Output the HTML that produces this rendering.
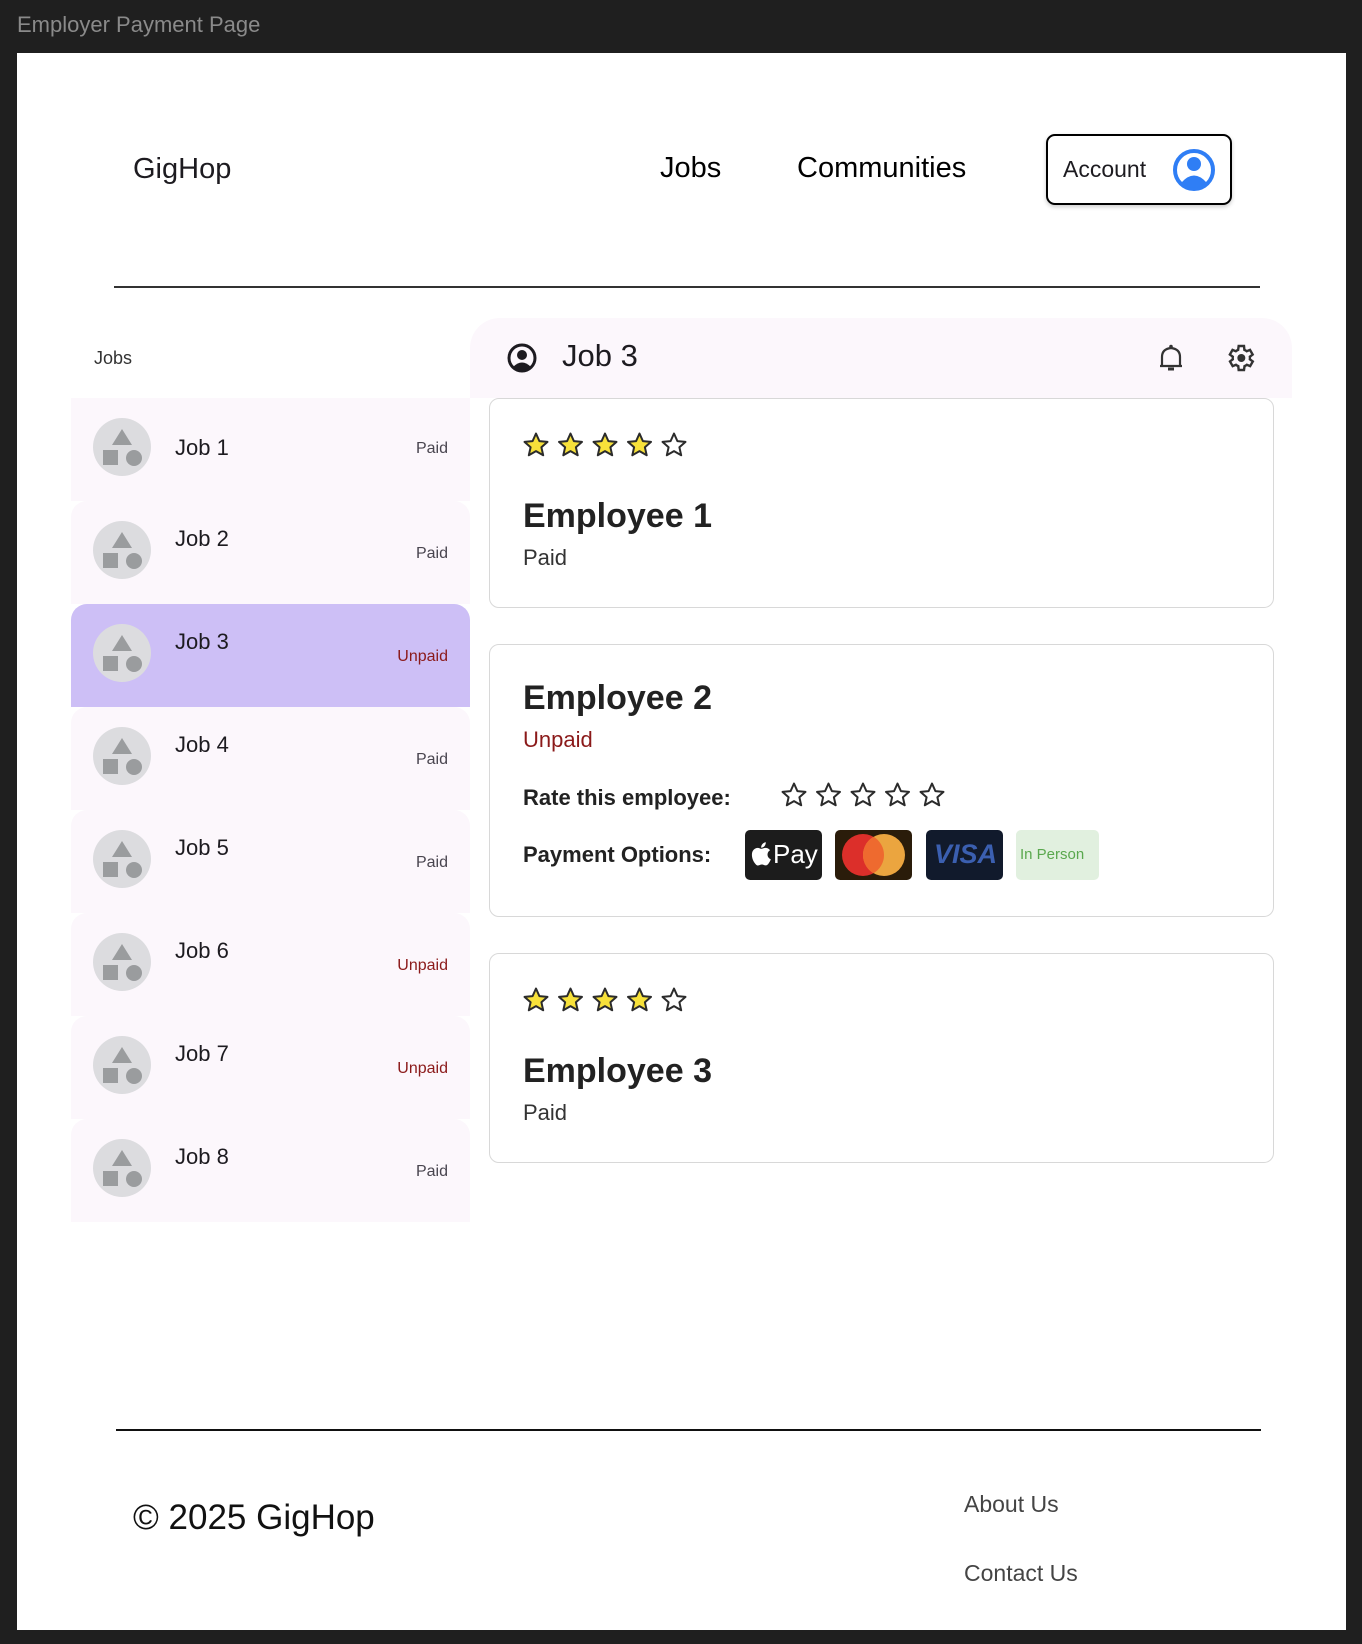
<!DOCTYPE html>
<html><head><meta charset="utf-8"><style>
*{box-sizing:border-box;margin:0;padding:0}
body{width:1362px;height:1644px;background:#1f1f1f;font-family:"Liberation Sans",sans-serif;position:relative;overflow:hidden;color:#1d1b20}
.abs{position:absolute}
.title{left:17px;top:12px;color:#8a8a8a;font-size:22px}
.panel{left:17px;top:53px;width:1329px;height:1577px;background:#fff}
.nav{font-size:29px;color:#000}
.acct{left:1046px;top:134px;width:186px;height:71px;border:2px solid #000;border-radius:9px;box-shadow:0 2px 4px rgba(0,0,0,.2)}
.line{height:2px;background:#333}
.item{left:71px;width:399px;height:103px;background:#fcf7fc;border-radius:16px 16px 0 0}
.item.sel{background:#cdbff6}
.av{position:absolute;left:22px;top:20px;width:58px;height:58px}
.jt{position:absolute;left:104px;font-size:22px;color:#1d1b20}
.st{position:absolute;right:22px;font-size:16px;color:#49454f}
.st.u{color:#8b1a1a}
.card{left:489px;width:785px;border:1.5px solid #d8d8d8;border-radius:10px;background:#fff}
.emp{font-size:34px;font-weight:bold;color:#222;position:absolute;left:33px}
.sub{font-size:22px;color:#333;position:absolute;left:33px}
.lbl{font-size:22px;font-weight:bold;color:#222;position:absolute;left:33px}
.stars{position:absolute;left:33px;display:flex;gap:7px}
.pay{position:absolute;top:185px;width:77px;height:50px;border-radius:5px;overflow:hidden}
</style></head><body>
<svg width="0" height="0" style="position:absolute"><defs>
<g id="avt"><circle cx="29" cy="29" r="29" fill="#dcdcdf"/><path d="M29 11L39 27H19Z" fill="#9a9c9e"/><rect x="10" y="32" width="15" height="15" fill="#9a9c9e"/><circle cx="41" cy="40" r="8" fill="#9a9c9e"/></g>
<path id="s" d="M13 1.5l3.4 7.6 8.1.8-6.1 5.4 1.8 8-7.2-4.2-7.2 4.2 1.8-8L1.5 9.9l8.1-.8z" stroke="#2b2b2b" stroke-width="2" stroke-linejoin="round"/>
</defs></svg>
<div class="abs title">Employer Payment Page</div>
<div class="abs panel"></div>
<div class="abs" style="left:133px;top:153px;font-size:29px">GigHop</div>
<div class="abs nav" style="left:660px;top:152px">Jobs</div>
<div class="abs nav" style="left:797px;top:152px">Communities</div>
<div class="abs acct"><span class="abs" style="left:15px;top:20px;font-size:23px">Account</span>
<svg class="abs" style="left:124px;top:12px" width="44" height="44" viewBox="0 0 44 44"><circle cx="22" cy="22" r="19" fill="none" stroke="#2f7ef5" stroke-width="4"/><circle cx="22" cy="16" r="7" fill="#2f7ef5"/><path d="M9 35 Q22 20 35 35 Q22 44 9 35Z" fill="#2f7ef5"/></svg></div>
<div class="abs line" style="left:114px;top:286px;width:1146px"></div>

<div class="abs" style="left:94px;top:348px;font-size:18px;color:#333">Jobs</div>
<div class="abs" style="left:470px;top:318px;width:822px;height:80px;background:#fcf7fc;border-radius:30px 30px 0 0"></div>
<svg class="abs" style="left:506px;top:342px" width="32" height="32" viewBox="0 0 32 32"><circle cx="16" cy="16" r="13" fill="none" stroke="#1d1b20" stroke-width="3"/><circle cx="16" cy="13" r="5" fill="#1d1b20"/><path d="M7 25 Q16 16 25 25 Q16 31 7 25Z" fill="#1d1b20"/></svg>
<div class="abs" style="left:562px;top:338px;font-size:31px">Job 3</div>
<svg class="abs" style="left:1158px;top:343px" width="26" height="30" viewBox="0 0 26 30"><path d="M4 23V14Q4 6 13 5Q22 6 22 14V23ZM2 23H24" fill="none" stroke="#333" stroke-width="2.2"/><circle cx="13" cy="3.5" r="1.8" fill="#333"/><path d="M10 26H16" stroke="#333" stroke-width="3"/></svg>
<svg class="abs" style="left:1224px;top:342px" width="32" height="32" viewBox="0 0 24 24"><path d="M19.4 13a7.5 7.5 0 0 0 0-2l2.1-1.6-2-3.5-2.5 1a7 7 0 0 0-1.7-1L15 3h-4l-.4 2.9a7 7 0 0 0-1.7 1l-2.5-1-2 3.5L6.6 11a7.5 7.5 0 0 0 0 2l-2.1 1.6 2 3.5 2.5-1a7 7 0 0 0 1.7 1L11 21h4l.4-2.9a7 7 0 0 0 1.7-1l2.5 1 2-3.5z" fill="none" stroke="#333" stroke-width="1.8"/><circle cx="13" cy="12" r="3" fill="#333"/></svg>

<div class="abs item" style="top:398px;border-radius:0"><svg class="av" viewBox="0 0 58 58"><use href="#avt"/></svg><span class="jt" style="top:37px">Job 1</span><span class="st" style="top:42px">Paid</span></div>
<div class="abs item" style="top:501px"><svg class="av" viewBox="0 0 58 58"><use href="#avt"/></svg><span class="jt" style="top:25px">Job 2</span><span class="st" style="top:44px">Paid</span></div>
<div class="abs item sel" style="top:604px"><svg class="av" viewBox="0 0 58 58"><use href="#avt"/></svg><span class="jt" style="top:25px">Job 3</span><span class="st u" style="top:44px">Unpaid</span></div>
<div class="abs item" style="top:707px"><svg class="av" viewBox="0 0 58 58"><use href="#avt"/></svg><span class="jt" style="top:25px">Job 4</span><span class="st" style="top:44px">Paid</span></div>
<div class="abs item" style="top:810px"><svg class="av" viewBox="0 0 58 58"><use href="#avt"/></svg><span class="jt" style="top:25px">Job 5</span><span class="st" style="top:44px">Paid</span></div>
<div class="abs item" style="top:913px"><svg class="av" viewBox="0 0 58 58"><use href="#avt"/></svg><span class="jt" style="top:25px">Job 6</span><span class="st u" style="top:44px">Unpaid</span></div>
<div class="abs item" style="top:1016px"><svg class="av" viewBox="0 0 58 58"><use href="#avt"/></svg><span class="jt" style="top:25px">Job 7</span><span class="st u" style="top:44px">Unpaid</span></div>
<div class="abs item" style="top:1119px"><svg class="av" viewBox="0 0 58 58"><use href="#avt"/></svg><span class="jt" style="top:25px">Job 8</span><span class="st" style="top:44px">Paid</span></div>

<div class="abs card" style="top:398px;height:210px">
<div class="stars" style="top:33px"><svg width="250" height="30" viewBox="0 0 250 30"><use href="#s" fill="#f7e13a"/><use href="#s" x="34.5" fill="#f7e13a"/><use href="#s" x="69" fill="#f7e13a"/><use href="#s" x="103.5" fill="#f7e13a"/><use href="#s" x="138" fill="none"/></svg></div>
<div class="emp" style="top:98px">Employee 1</div>
<div class="sub" style="top:146px">Paid</div>
</div>
<div class="abs card" style="top:644px;height:273px">
<div class="emp" style="top:34px">Employee 2</div>
<div class="sub" style="top:82px;color:#8b1a1a">Unpaid</div>
<div class="lbl" style="top:140px">Rate this employee:</div>
<div class="stars" style="top:137px;left:291px"><svg width="250" height="30" viewBox="0 0 250 30"><use href="#s" fill="none"/><use href="#s" x="34.5" fill="none"/><use href="#s" x="69" fill="none"/><use href="#s" x="103.5" fill="none"/><use href="#s" x="138" fill="none"/></svg></div>
<div class="lbl" style="top:197px">Payment Options:</div>
<div class="pay" style="left:255px;background:#1c1c1c;color:#fff;font-size:26px;padding:9px 0 0 28px">Pay<svg class="abs" style="left:6px;top:12px" width="20" height="24" viewBox="0 0 20 24"><path d="M16.5 12.7c0-3 2.4-4.4 2.5-4.5-1.4-2-3.5-2.3-4.2-2.3-1.8-.2-3.5 1-4.4 1-.9 0-2.3-1-3.8-1C4.7 6 2.9 7.1 1.9 8.8c-2.1 3.6-.5 8.9 1.5 11.8 1 1.4 2.2 3 3.7 2.9 1.5-.1 2-1 3.800-1s2.300 1 3.800.9c1.6 0 2.600-1.400 3.500-2.900 1.100-1.600 1.600-3.200 1.600-3.300-.1 0-3.200-1.200-3.300-4.500zM13.600 4c.8-1 1.300-2.300 1.200-3.700-1.200.1-2.600.8-3.400 1.800-.8.9-1.400 2.300-1.200 3.600 1.300.1 2.600-.7 3.400-1.700z" fill="#fff"/></svg></div>
<div class="pay" style="left:345px;background:#2a1c0a"><svg width="77" height="50"><circle cx="28" cy="25" r="21" fill="#dc2f2a"/><circle cx="49" cy="25" r="21" fill="#eba53f"/><path d="M38.5 6.8a21 21 0 0 1 0 36.4a21 21 0 0 1 0-36.4z" fill="#ee6a2f"/></svg></div>
<div class="pay" style="left:436px;background:#111a2c;color:#3b5fb0;font-size:27px;font-weight:bold;font-style:italic;padding:9px 0 0 8px">VISA</div>
<div class="pay" style="left:526px;width:83px;background:#e1f0df;color:#5aa84e;font-size:15px;padding:16px 0 0 4px">In Person</div>
</div>
<div class="abs card" style="top:953px;height:210px">
<div class="stars" style="top:33px"><svg width="250" height="30" viewBox="0 0 250 30"><use href="#s" fill="#f7e13a"/><use href="#s" x="34.5" fill="#f7e13a"/><use href="#s" x="69" fill="#f7e13a"/><use href="#s" x="103.5" fill="#f7e13a"/><use href="#s" x="138" fill="none"/></svg></div>
<div class="emp" style="top:98px">Employee 3</div>
<div class="sub" style="top:146px">Paid</div>
</div>

<div class="abs line" style="left:116px;top:1429px;width:1145px;background:#111"></div>
<div class="abs" style="left:133px;top:1498px;font-size:35px;color:#111">© 2025 GigHop</div>
<div class="abs" style="left:964px;top:1491px;font-size:23px;color:#444">About Us</div>
<div class="abs" style="left:964px;top:1560px;font-size:23px;color:#444">Contact Us</div>
</body></html>
